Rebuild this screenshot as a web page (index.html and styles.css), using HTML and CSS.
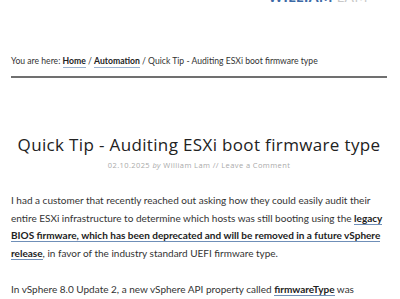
FILE: index.html
```html
<!DOCTYPE html>
<html>
<head>
<meta charset="utf-8">
<link rel="stylesheet" href="styles.css">
</head>
<body>
<header class="site-header">
  <div class="logo"><span class="logo-a">WILLIAM</span><span class="logo-b">LAM</span></div>
</header>
<nav class="breadcrumb">You are here: <a href="#">Home</a> / <a href="#">Automation</a> / Quick Tip - Auditing ESXi boot firmware type</nav>
<article class="post">
  <h1 class="title">Quick Tip - Auditing ESXi boot firmware type</h1>
  <p class="meta">02.10.2025 <span class="by">by</span> William Lam // Leave a Comment</p>
  <div class="content">
    <p>I had a customer that recently reached out asking how they could easily audit their entire ESXi infrastructure to determine which hosts was still booting using the <a href="#">legacy BIOS firmware, which has been deprecated and will be removed in a future vSphere release</a>, in favor of the industry standard UEFI firmware type.</p>
    <p>In vSphere 8.0 Update 2, a new vSphere API property called <a href="#">firmwareType</a> was</p>
  </div>
</article>
</body>
</html>
```
FILE: styles.css
```css
html, body { margin: 0; padding: 0; background: #fff; }
body { font-family: Lato, "Liberation Sans", sans-serif; color: #333; overflow: hidden; }
.site-header { height: 40px; display: flex; justify-content: flex-end; padding-right: 32px; overflow: hidden; }
.logo { margin-top: -12px; font-family: Lato, sans-serif; font-weight: 900; font-size: 14px; letter-spacing: 0.5px; display: flex; gap: 4px; height: 16px; }
.logo-a { color: #3d6aa6; }
.logo-b { color: #c8c8c8; font-weight: 400; }
.breadcrumb { margin: 0 13px 0 11px; padding: 14px 0 9px; font-size: 8.62px; color: #333; border-bottom: 2px solid #707070; line-height: 13px; }
.breadcrumb a { color: #222; font-weight: 700; text-decoration: none; border-bottom: 1px solid #9db3cf; padding-bottom: 1px; }
.post { padding: 0 13px 0 11px; }
.title { margin: 56px 0 0; font-family: "Open Sans", sans-serif; font-weight: 400; font-size: 17px; letter-spacing: 0.35px; text-align: center; color: #222; line-height: 22px; }
.meta { margin: 3px 0 0; text-align: center; font-family: "Open Sans", sans-serif; font-size: 7.5px; letter-spacing: 0.4px; color: #aaa; line-height: 12px; }
.meta .by { font-style: italic; }
.content { margin-top: 21px; font-size: 10px; line-height: 17.7px; color: #333; }
.content p { margin: 0 0 17.7px; }
.content a { color: #222; font-weight: 700; text-decoration: none; border-bottom: 1px solid #6f8fb8; }
```
